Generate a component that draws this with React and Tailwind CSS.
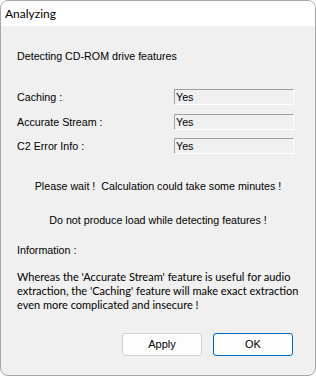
const rows = [
  { label: 'Caching :', value: 'Yes', mt: 'mt-[26px]' },
  { label: 'Accurate Stream :', value: 'Yes', mt: 'mt-[9px]' },
  { label: 'C2 Error Info :', value: 'Yes', mt: 'mt-[8px]' },
];

const classic = { fontFamily: '"Liberation Sans", Arial, sans-serif' };
const segoe = { fontFamily: 'Lato, "Noto Sans", sans-serif' };

export default function App() {
  return (
    <div className="w-[316px] h-[376px] bg-white">
      <div className="h-full flex flex-col rounded-[8px] border border-[#a6a6a6] overflow-hidden bg-[#f0f0f0]">
        {/* Title bar */}
        <div className="h-[25px] shrink-0 bg-white flex items-center pl-[4px] text-[12px] text-black" style={segoe}>
          Analyzing
        </div>

        {/* Body */}
        <div className="flex flex-col text-[10.7px] leading-[13px] text-black" style={classic}>
          <div className="mt-[24px] pl-[16px]">Detecting CD-ROM drive features</div>

          {rows.map((r) => (
            <div key={r.label} className={`${r.mt} flex items-center h-[16px] pl-[16px]`}>
              <div className="w-[157px]">{r.label}</div>
              <div className="w-[120px] h-[16px] border-t border-l border-t-[#a0a0a0] border-l-[#a0a0a0] border-b border-r border-b-white border-r-white pl-[1px] leading-[14px]">
                {r.value}
              </div>
            </div>
          ))}

          <div className="mt-[26px] text-center whitespace-pre">Please wait !  Calculation could take some minutes !</div>
          <div className="mt-[21px] text-center">Do not produce load while detecting features !</div>
          <div className="mt-[17px] pl-[16px]">Information :</div>

          <p className="mt-[13px] pl-[16px] text-[11px] leading-[14px] whitespace-nowrap" style={segoe}>
            Whereas the 'Accurate Stream' feature is useful for audio
            <br />
            extraction, the 'Caching' feature will make exact extraction
            <br />
            even more complicated and insecure !
          </p>

          <div className="mt-[21px] flex justify-end gap-[11px] pr-[22px]">
            <button className="w-[80px] h-[23px] rounded-[3px] border border-[#d0d0d0] bg-[#fdfdfd] text-[11px]" style={classic}>
              Apply
            </button>
            <button className="w-[80px] h-[23px] rounded-[3px] border border-[#0067c0] bg-[#fdfdfd] text-[11px]" style={classic}>
              OK
            </button>
          </div>
        </div>
      </div>
    </div>
  );
}
